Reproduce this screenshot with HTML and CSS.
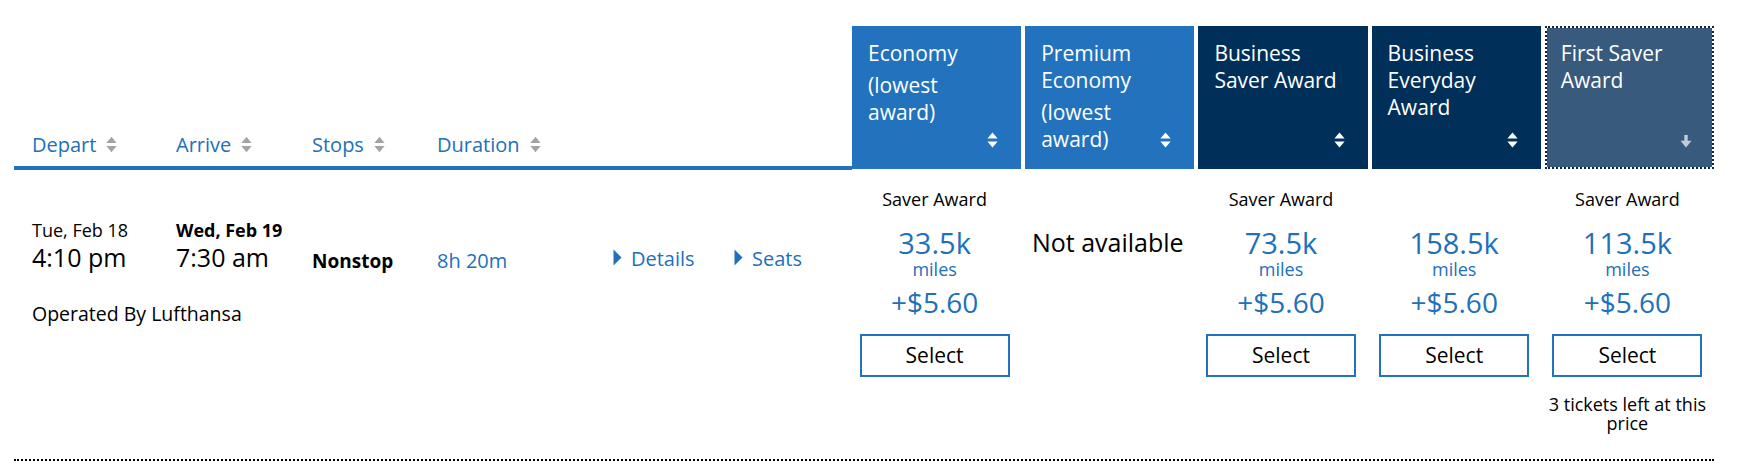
FILE: index.html
```html
<!DOCTYPE html>
<html lang="en">
<head>
<meta charset="utf-8">
<title>Flight results</title>
<link rel="stylesheet" href="styles.css">
</head>
<body>
<div class="results">
  <div class="head">
    <div class="head-left">
      <div class="hcol c1"><span>Depart</span><svg class="sort" viewBox="0 0 11 17"><path d="M5.5 0.8 L10.6 7 H0.4 Z"/><path d="M0.4 10 H10.6 L5.5 16.2 Z"/></svg></div>
      <div class="hcol c2"><span>Arrive</span><svg class="sort" viewBox="0 0 11 17"><path d="M5.5 0.8 L10.6 7 H0.4 Z"/><path d="M0.4 10 H10.6 L5.5 16.2 Z"/></svg></div>
      <div class="hcol c3"><span>Stops</span><svg class="sort" viewBox="0 0 11 17"><path d="M5.5 0.8 L10.6 7 H0.4 Z"/><path d="M0.4 10 H10.6 L5.5 16.2 Z"/></svg></div>
      <div class="hcol c4"><span>Duration</span><svg class="sort" viewBox="0 0 11 17"><path d="M5.5 0.8 L10.6 7 H0.4 Z"/><path d="M0.4 10 H10.6 L5.5 16.2 Z"/></svg></div>
      <div class="hcol c5"></div>
      <div class="hcol c6"></div>
    </div>
    <div class="fare-heads">
      <div class="fh blue">
        <div class="fh-title">Economy</div>
        <div class="fh-sub">(lowest award)</div>
        <svg class="fh-sort" viewBox="0 0 11 16"><path d="M5.5 0.6 L10.6 6.6 H0.4 Z"/><path d="M0.4 9.4 H10.6 L5.5 15.4 Z"/></svg>
      </div>
      <div class="fh blue">
        <div class="fh-title">Premium Economy</div>
        <div class="fh-sub">(lowest award)</div>
        <svg class="fh-sort" viewBox="0 0 11 16"><path d="M5.5 0.6 L10.6 6.6 H0.4 Z"/><path d="M0.4 9.4 H10.6 L5.5 15.4 Z"/></svg>
      </div>
      <div class="fh navy">
        <div class="fh-title">Business Saver Award</div>
        <svg class="fh-sort" viewBox="0 0 11 16"><path d="M5.5 0.6 L10.6 6.6 H0.4 Z"/><path d="M0.4 9.4 H10.6 L5.5 15.4 Z"/></svg>
      </div>
      <div class="fh navy">
        <div class="fh-title">Business Everyday Award</div>
        <svg class="fh-sort" viewBox="0 0 11 16"><path d="M5.5 0.6 L10.6 6.6 H0.4 Z"/><path d="M0.4 9.4 H10.6 L5.5 15.4 Z"/></svg>
      </div>
      <div class="fh first">
        <div class="fh-title">First Saver Award</div>
        <svg class="fh-arrow" viewBox="0 0 12 13"><rect x="4.3" y="0" width="3.4" height="7"/><path d="M0.5 5.8 H11.5 L6 12.6 Z"/></svg>
      </div>
    </div>
  </div>

  <div class="row">
    <div class="row-left">
      <div class="rcol c1 when">
        <div class="date">Tue, Feb 18</div>
        <div class="time">4:10 pm</div>
        <div class="operated">Operated By Lufthansa</div>
      </div>
      <div class="rcol c2 when">
        <div class="date bold">Wed, Feb 19</div>
        <div class="time">7:30 am</div>
      </div>
      <div class="rcol c3 stops">Nonstop</div>
      <div class="rcol c4 duration">8h 20m</div>
      <div class="rcol c5 link"><svg class="tri" viewBox="0 0 9 17"><path d="M0.5 0.5 L8.5 8.5 L0.5 16.5 Z"/></svg><span>Details</span></div>
      <div class="rcol c6 link"><svg class="tri" viewBox="0 0 9 17"><path d="M0.5 0.5 L8.5 8.5 L0.5 16.5 Z"/></svg><span>Seats</span></div>
    </div>
    <div class="fares">
      <div class="fare">
        <div class="award-type">Saver Award</div>
        <div class="miles-num">33.5k</div>
        <div class="miles-label">miles</div>
        <div class="price">+$5.60</div>
        <button class="select">Select</button>
      </div>
      <div class="fare">
        <div class="na">Not available</div>
      </div>
      <div class="fare">
        <div class="award-type">Saver Award</div>
        <div class="miles-num">73.5k</div>
        <div class="miles-label">miles</div>
        <div class="price">+$5.60</div>
        <button class="select">Select</button>
      </div>
      <div class="fare">
        <div class="award-type empty"></div>
        <div class="miles-num">158.5k</div>
        <div class="miles-label">miles</div>
        <div class="price">+$5.60</div>
        <button class="select">Select</button>
      </div>
      <div class="fare">
        <div class="award-type">Saver Award</div>
        <div class="miles-num">113.5k</div>
        <div class="miles-label">miles</div>
        <div class="price">+$5.60</div>
        <button class="select">Select</button>
        <div class="note">3 tickets left at this price</div>
      </div>
    </div>
  </div>
</div>
</body>
</html>
```

FILE: styles.css
```css
* { box-sizing: border-box; }

body {
  margin: 0;
  background: #fff;
  color: #000;
  font-family: "Open Sans", "Noto Sans", "Liberation Sans", sans-serif;
}

.results {
  width: 1700px;
  margin-left: 14px;
}

/* ---------- header ---------- */
.head {
  display: flex;
  margin-top: 26px;
}

.head-left {
  width: 838px;
  height: 144px;
  display: flex;
  align-items: flex-end;
  padding-bottom: 8px;
  border-bottom: 4px solid #2272bd;
}

.hcol {
  display: flex;
  align-items: center;
  gap: 10px;
  padding-left: 18px;
  color: #2170ba;
  font-size: 20px;
  line-height: 27px;
}

.c1 { width: 144px; }
.c2 { width: 136px; }
.c3 { width: 125px; }
.c4 { width: 176px; }
.c5 { width: 121px; }
.c6 { width: 136px; }

.sort {
  width: 11px;
  height: 17px;
  fill: #a3a3a3;
}

.fare-heads {
  width: 862px;
  height: 143px;
  display: grid;
  grid-template-columns: repeat(5, 1fr);
  gap: 4px;
}

.fh {
  position: relative;
  padding: 14px 20px 0 16px;
  color: #fff;
  font-size: 21px;
  line-height: 27px;
}

.fh.blue { background: #2272bd; }
.fh.navy { background: #002f5a; }
.fh.first {
  background: #385a7d;
  background-clip: padding-box;
  border: 2px dotted #0d2540;
  padding: 12px 18px 0 14px;
}

.fh-sub { margin-top: 5px; }

.fh-sort {
  position: absolute;
  right: 23px;
  bottom: 21px;
  width: 11px;
  height: 16px;
  fill: #fff;
}

.fh-arrow {
  position: absolute;
  right: 20px;
  bottom: 19px;
  width: 12px;
  height: 13px;
  fill: #c3ccd6;
}

/* ---------- row ---------- */
.row {
  display: flex;
  height: 291px;
  border-bottom: 2px dotted #000;
}

.row-left {
  width: 838px;
  display: flex;
}

.rcol { padding-left: 18px; }

.when { padding-top: 49px; }

.date {
  font-size: 18px;
  line-height: 22px;
}
.date.bold { font-weight: 700; }

.time {
  font-size: 25px;
  line-height: 33px;
}

.operated {
  margin-top: 28.5px;
  font-size: 19.5px;
  line-height: 22px;
  white-space: nowrap;
}

.stops {
  padding-top: 78px;
  font-size: 19px;
  line-height: 26px;
  font-weight: 700;
}

.duration {
  padding-top: 77px;
  font-size: 20px;
  line-height: 27px;
  color: #2170ba;
}

.link {
  padding-top: 75px;
  display: flex;
  align-items: flex-start;
  gap: 9px;
  font-size: 20px;
  line-height: 27px;
  color: #2170ba;
}

.tri {
  width: 9px;
  height: 17px;
  margin-top: 4px;
  fill: #2170ba;
}

.fares {
  width: 862px;
  display: grid;
  grid-template-columns: repeat(5, 1fr);
  gap: 4px;
}

.fare {
  display: flex;
  flex-direction: column;
  align-items: center;
  text-align: center;
  padding-top: 17px;
  padding-right: 4px;
}

.award-type {
  font-size: 18px;
  line-height: 24px;
}
.award-type.empty { height: 24px; }

.miles-num {
  margin-top: 15px;
  font-size: 29px;
  line-height: 33px;
  color: #2170ba;
}

.miles-label {
  font-size: 18px;
  line-height: 20px;
  color: #2170ba;
}

.price {
  margin-top: 6px;
  font-size: 28px;
  line-height: 34px;
  color: #2170ba;
}

.select {
  margin-top: 15px;
  width: 150px;
  height: 43px;
  padding: 0;
  border: 2px solid #2272bd;
  background: #fff;
  color: #000;
  font-family: "Open Sans", "Noto Sans", sans-serif;
  font-size: 21px;
  line-height: 39px;
}

.note {
  margin-top: 18px;
  font-size: 18px;
  line-height: 19px;
}

.na {
  margin-top: 40px;
  font-size: 25px;
  line-height: 30px;
}
```
